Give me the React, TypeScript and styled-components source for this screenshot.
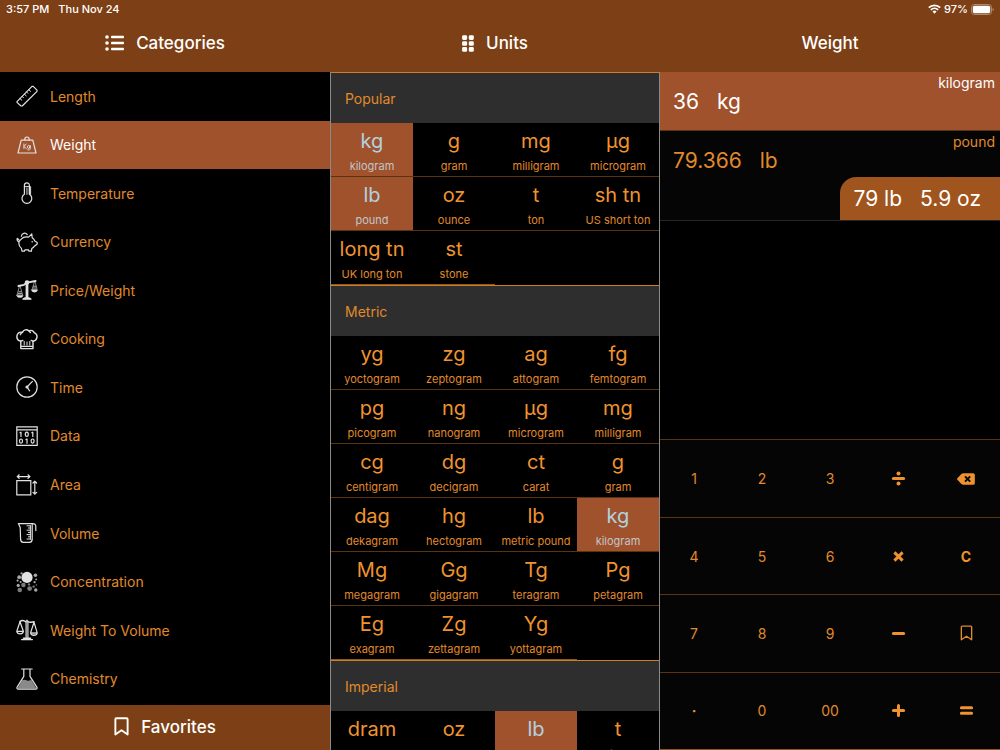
import React from "react";
import styled, { createGlobalStyle, css } from "styled-components";

const color = {
  bar: "#7d4016",
  active: "#a0522d",
  accent: "#f0932f",
  accentSoft: "#e08a2c",
  badge: "#a0541e",
  line: "#5a340f",
  panel: "#2e2e2e",
  key: "#050505",
  picked: "#b2d2e0",
  pickedSoft: "#c0c6c8",
};

const GlobalStyle = createGlobalStyle`
  * { box-sizing: border-box; }
  body {
    margin: 0;
    background: #000;
    color: ${color.accent};
    font-family: Inter, "Liberation Sans", sans-serif;
    font-size: 14px;
  }
  h1, h2, h3, p, ul { margin: 0; padding: 0; font-weight: 400; }
  ul { list-style: none; }
  button {
    margin: 0;
    padding: 0;
    border: 0;
    background: none;
    color: inherit;
    font: inherit;
    cursor: pointer;
  }
  svg { display: block; flex: none; }
`;

const columns = css`
  display: grid;
  grid-template-columns: 33fr 33fr 34fr;
`;

const Page = styled.div`
  display: flex;
  flex-direction: column;
  height: 100vh;
`;

const TopBar = styled.header`
  background: ${color.bar};
  color: #fff;
  padding-bottom: 4px;
`;

const StatusBar = styled.div`
  display: flex;
  justify-content: space-between;
  height: 18px;
  padding: 0 6px;
  font-size: 11px;
  line-height: 18px;
  font-weight: 500;
`;

const StatusGroup = styled.div<{ $gap: number }>`
  display: flex;
  align-items: center;
  gap: ${(p) => p.$gap}px;
`;

const Titles = styled.div`
  ${columns}
  height: 50px;
`;

const Title = styled.h1`
  display: flex;
  align-items: center;
  justify-content: center;
  gap: 12px;
  font-size: 17px;
  font-weight: 500;
`;

const Body = styled.main`
  ${columns}
  flex: 1;
  min-height: 0;
`;

const CategoryColumn = styled.nav`
  display: flex;
  flex-direction: column;
  min-height: 0;
`;

const CategoryList = styled.ul`
  flex: 1;
  display: flex;
  flex-direction: column;
  padding-bottom: 2px;
  min-height: 0;
`;

const CategoryItem = styled.li`
  flex: 1;
  display: flex;
`;

const CategoryButton = styled.button<{ $active: boolean }>`
  flex: 1;
  display: flex;
  align-items: center;
  gap: 12px;
  padding-left: 16px;
  text-align: left;
  background: ${(p) => (p.$active ? color.active : "transparent")};
  color: ${(p) => (p.$active ? "#fff" : color.accentSoft)};
  svg { color: #e2e2e2; }
`;

const FavoritesButton = styled.button`
  display: flex;
  align-items: center;
  justify-content: center;
  gap: 12px;
  height: 45px;
  padding-bottom: 2px;
  background: ${color.bar};
  color: #fff;
  font-size: 17px;
  font-weight: 500;
`;

const UnitColumn = styled.section`
  border-left: 1px solid #8a8a8a;
  border-right: 1px solid #8a8a8a;
  overflow-y: auto;
  scrollbar-width: none;
`;

const GroupTitle = styled.h2`
  display: flex;
  align-items: center;
  height: 51px;
  padding: 0 14px;
  border-top: 1px solid #d07d28;
  background: ${color.panel};
  color: ${color.accentSoft};
  font-size: 14px;
`;

const UnitGrid = styled.div`
  display: grid;
  grid-template-columns: repeat(4, 1fr);
`;

const Symbol = styled.span`
  font-size: 20px;
  line-height: 24px;
`;

const UnitName = styled.span`
  font-size: 11px;
  line-height: 18px;
`;

const UnitButton = styled.button<{ $active: boolean; $last: boolean }>`
  display: flex;
  flex-direction: column;
  align-items: center;
  gap: 4px;
  height: 54px;
  padding-top: 6px;
  white-space: nowrap;
  border-bottom: 1px solid ${(p) => (p.$last ? "#8f561c" : color.line)};
  background: ${(p) => (p.$active ? color.active : "transparent")};
  color: ${(p) => (p.$active ? color.picked : color.accent)};
  ${UnitName} {
    color: ${(p) => (p.$active ? color.pickedSoft : color.accentSoft)};
  }
`;

const ConverterColumn = styled.section`
  display: flex;
  flex-direction: column;
  min-height: 0;
`;

const Results = styled.div`
  flex: 368 1 0;
`;

const Result = styled.div<{ $active?: boolean }>`
  display: flex;
  flex-direction: column;
  border-bottom: 1px solid ${(p) => (p.$active ? color.line : "#262626")};
  background: ${(p) => (p.$active ? color.active : color.key)};
  color: ${(p) => (p.$active ? "#fff" : color.accentSoft)};
`;

const ResultMain = styled.div`
  display: flex;
  justify-content: space-between;
  height: 58px;
  padding: 0 5px 0 13px;
`;

const Amount = styled.p`
  display: flex;
  align-items: center;
  gap: 18px;
  font-size: 21px;
`;

const ResultUnit = styled.span`
  line-height: 22px;
`;

const Breakdown = styled.p`
  display: flex;
  align-items: center;
  align-self: flex-end;
  gap: 18px;
  height: 43px;
  margin-top: -12px;
  padding: 0 19px 0 14px;
  border-top-left-radius: 16px;
  background: ${color.badge};
  color: #fff;
  font-size: 21px;
`;

const Keypad = styled.div`
  flex: 310 1 0;
  display: grid;
  grid-template-columns: repeat(5, 1fr);
  grid-template-rows: repeat(4, 1fr);
  border-bottom: 1px solid #8f561c;
`;

const Key = styled.button<{ $strong?: boolean }>`
  display: flex;
  align-items: center;
  justify-content: center;
  border-top: 1px solid ${color.line};
  background: ${color.key};
  color: ${(p) => (p.$strong ? color.accent : color.accentSoft)};
  font-weight: ${(p) => (p.$strong ? 700 : 400)};
`;

/* ---------- icons ---------- */

const Icon = ({ children, w = 1.3 }: { children: React.ReactNode; w?: number }) => (
  <svg width="22" height="22" viewBox="0 0 22 22" fill="none" stroke="currentColor" strokeWidth={w} strokeLinejoin="round" strokeLinecap="round" aria-hidden="true">
    {children}
  </svg>
);

const BookmarkIcon = ({ width, height, w }: { width: number; height: number; w: number }) => (
  <svg width={width} height={height} viewBox="0 0 14 18" fill="none" stroke="currentColor" strokeWidth={w} strokeLinejoin="round" aria-hidden="true">
    <path d="M1.2 2.2Q1.2 1.2 2.2 1.2H11.8Q12.8 1.2 12.8 2.2V16.6L7 12.6L1.2 16.6Z" />
  </svg>
);

const icons: Record<string, React.ReactNode> = {
  Length: (
    <Icon w={1.2}>
      <path d="M1 16.6L16 1.4H17.2L21 5.2V6.4L6.2 21H5L1 17.4Z" />
      <path d="M4 13.6L5.8 15.2M6.2 11.4L7.4 12.6M8.4 9.2L10.2 10.8M10.6 7L11.8 8.2M12.8 4.8L14.6 6.4" strokeWidth="1" />
    </Icon>
  ),
  Weight: (
    <Icon w={1.2}>
      <path d="M5.2 6.2H16.8L20 19H2L5.2 6.2Z" />
      <path d="M8.8 6V5.2A2.2 2.2 0 0 1 13.2 5.2V6" />
      <path strokeWidth="0.9" d="M7.9 10V14.6M10.2 10L8 12.6L10.4 14.6" />
      <ellipse cx="12.7" cy="12.9" rx="1.3" ry="1.5" strokeWidth="0.9" />
      <path strokeWidth="0.9" d="M14.2 11.5V15.2Q13.8 16.3 11.8 15.9" />
    </Icon>
  ),
  Temperature: (
    <Icon w={1.2}>
      <path d="M8.4 12.2V3.4A2.5 2.5 0 0 1 13.4 3.4V12.2A4.9 4.9 0 1 1 8.4 12.2Z" />
      <path d="M8.6 4.6H14.6V12.4" strokeWidth="1" />
      <path d="M10.4 6V12.4M11.8 6V12.4" strokeWidth="0.6" />
    </Icon>
  ),
  Currency: (
    <Icon w={1.2}>
      <path d="M5.2 8.2C7 6.2 9.8 5.6 12.6 6.2L15.8 3L16.2 6.8C17.6 7.8 18.4 9 18.8 10L21.2 11.4V13L18.4 15.2C17.6 16.4 16.8 17 15.8 17.6L15.4 20.2H13L12.4 18.8H9L8.4 20.2H6L5.4 17.4C3.6 15.8 2.8 13.8 2.8 12C2.8 10.6 3.6 9.2 5.2 8.2Z" />
      <path d="M2.8 10.6Q0.6 10 1.2 7.4M1.2 7.4L2.8 8.6M5.4 5.2A3.2 3.2 0 0 1 11.2 3.6" />
      <circle cx="16.2" cy="10.8" r="0.8" fill="currentColor" stroke="none" />
    </Icon>
  ),
  "Price/Weight": (
    <Icon>
      <path d="M2.4 7L8 5.8L11 3.6L19.6 2" strokeWidth="1.8" />
      <circle cx="11" cy="3.4" r="1.6" fill="currentColor" />
      <path d="M11 4V19" strokeWidth="2.8" strokeLinecap="butt" />
      <path d="M7 20.2Q8 18.6 11 18.6T15 20.2Z" fill="currentColor" />
      <path d="M3.4 7.4L1 16H6.6L4.2 7.4M18.6 2.4L16 10.6H21.2L19 2.4" strokeWidth="0.6" />
      <path d="M0.6 16.4H7.2Q6.6 18.6 3.9 18.6T0.6 16.4ZM15.4 11H21.6Q21 13.2 18.5 13.2T15.4 11Z" fill="currentColor" strokeWidth="0.4" />
      <path d="M2.4 14.6H5.4M2.8 12.8H5M17.2 9H20M17.6 7.2H19.6" strokeWidth="0.8" />
    </Icon>
  ),
  Cooking: (
    <Icon w={1.4}>
      <path d="M4.8 13.2C1.6 12.6 0.6 10 1 7.6C1.4 5 4.2 3.6 6.4 4.4C7.6 1.8 10.6 0.8 12.8 2.8C15.2 1.8 17.6 2.8 18.2 4.8C20.6 5.4 21.4 8 20.8 10C20.2 12.2 18.8 13 17 13.2" />
      <path d="M4.8 13.2V20.6H17V13.2M4.8 18.4H17M6.4 4.4Q4.8 5 4.4 6.6M13 3L14.4 4.4M4.8 13.2L6.8 12.4M17 13.2L15.2 12.4" />
      <path d="M8.2 13.4V17M11 14V17M13.8 13.4V17" strokeWidth="1" />
    </Icon>
  ),
  Time: (
    <Icon w={1.2}>
      <circle cx="11" cy="11" r="10.2" />
      <path d="M16.4 5.4L11 11L13.6 14.8" />
      <circle cx="11" cy="11" r="1" fill="currentColor" />
    </Icon>
  ),
  Data: (
    <Icon w={1.2}>
      <path d="M0.8 1.8H21.2V20.4H0.8ZM0.8 4.8H21.2" strokeLinejoin="miter" />
      <path d="M4 7.8L5 7.2V11.4M15.8 7.8L16.8 7.2V11.4M10 14.6L11 14V18.2" />
      <ellipse cx="10.8" cy="9.3" rx="1.5" ry="2.1" />
      <ellipse cx="5" cy="16.1" rx="1.5" ry="2.1" />
      <ellipse cx="16.6" cy="16.1" rx="1.5" ry="2.1" />
    </Icon>
  ),
  Area: (
    <Icon w={1.2}>
      <path d="M0.8 6.6H14.8V20.8H0.8Z" strokeLinejoin="miter" />
      <path d="M1.2 2.6H14M3.2 0.8L1.2 2.6L3.2 4.4M12 0.8L14 2.6L12 4.4M18.8 7.2V20.2M17 9L18.8 7.2L20.6 9M17 18.4L18.8 20.2L20.6 18.4" />
    </Icon>
  ),
  Volume: (
    <Icon w={1.2}>
      <path d="M2.4 1.6H16.4Q19.8 1.4 19.8 4.6V8.6M2.4 1.6L4.2 5.4L4.6 17.4Q4.8 20.4 7.4 20.4H13.4Q16 20.4 16.2 17.4V2.4" />
      <path d="M11 3.8H14.4M12.4 6H14.4M11 8.2H14.4M12.4 10.4H14.4M11 12.6H14.4M12.4 14.8H14.4M11 17H14.4M14.4 3.6V17.4" strokeWidth="1" />
    </Icon>
  ),
  Concentration: (
    <svg width="22" height="22" viewBox="0 0 22 22" fill="currentColor" aria-hidden="true">
      <circle cx="11" cy="6.4" r="5.6" />
      <g opacity="0.75">
        <circle cx="3.2" cy="6.2" r="1.9" />
        <circle cx="5.6" cy="2.4" r="1.1" />
        <circle cx="1.6" cy="9.6" r="1.1" />
        <circle cx="19.4" cy="4.2" r="1.8" />
        <circle cx="20.2" cy="8.4" r="0.9" />
        <circle cx="18.6" cy="11.2" r="1.1" />
        <circle cx="2.2" cy="14.4" r="1.6" />
        <circle cx="19.8" cy="19" r="1.7" />
        <circle cx="4.6" cy="11" r="1" />
      </g>
      <g opacity="0.55">
        <circle cx="7.4" cy="14" r="2.2" />
        <circle cx="3.8" cy="19" r="2.3" />
        <circle cx="13.6" cy="17.6" r="2.4" />
        <circle cx="13" cy="13.4" r="1.2" />
        <circle cx="17.6" cy="15.6" r="1.2" />
        <circle cx="20.4" cy="14" r="0.8" />
      </g>
    </svg>
  ),
  "Weight To Volume": (
    <Icon w={1.2}>
      <path d="M10.1 2.2V19M11.9 2.2V19M11 1V2" />
      <path d="M5.6 20.6H16.4M7.4 19.2H14.6" strokeWidth="1.4" />
      <path d="M4 2.4C6 1 8.4 1.6 9.8 2.8M12.2 2.8C13.8 3.6 16 3 18 2.8" strokeWidth="1.5" />
      <path d="M4 2.8L0.8 12.2M4 2.8L7.4 12.2M0.8 12.4H7.4Q7 14.8 4.1 14.8T0.8 12.4Z" />
      <path d="M18 3.2L14.6 13.8M18 3.2L21.2 13.8M14.6 14H21.2Q20.8 16.4 17.9 16.4T14.6 14Z" />
      <path d="M15 14.2H21Q20 16 18 16T15 14.2Z" fill="currentColor" opacity="0.5" />
    </Icon>
  ),
  Chemistry: (
    <Icon w={1.2}>
      <path d="M6.2 12.2Q8.6 11.2 11 12.6Q13 13.4 15 11.6L20 19.8Q20.4 20.6 19.6 20.6H2.4Q1.6 20.6 2 19.8Z" fill="#8a8a8a" stroke="none" />
      <path d="M5.6 1H16.2M7.8 1.4V8.4L1 19.4Q0.6 21.2 2.2 21.2H19.8Q21.4 21.2 21 19.4L14 8.4V1.4" />
    </Icon>
  ),
};

const ListIcon = () => (
  <svg width="19" height="16" viewBox="0 0 19 16" fill="#fff" aria-hidden="true">
    {[2, 8, 14].map((y) => (
      <React.Fragment key={y}>
        <circle cx="2" cy={y} r="1.8" />
        <rect x="6" y={y - 1.3} width="13" height="2.6" rx="0.8" />
      </React.Fragment>
    ))}
  </svg>
);

const GridIcon = () => (
  <svg width="12" height="17" viewBox="0 0 12 17" fill="#fff" aria-hidden="true">
    {[0.3, 6.2, 12.1].map((y) => (
      <React.Fragment key={y}>
        <rect x="0.1" y={y} width="5" height="4.6" rx="1.3" />
        <rect x="6.8" y={y} width="5" height="4.6" rx="1.3" />
      </React.Fragment>
    ))}
  </svg>
);

const WifiIcon = () => (
  <svg width="13" height="10" viewBox="0 0 13 10" fill="none" stroke="#fff" strokeWidth="1.8" aria-hidden="true">
    <path d="M0.8 3.6A8.2 8.2 0 0 1 12.2 3.6M2.9 5.9A5.2 5.2 0 0 1 10.1 5.9" />
    <path d="M4.5 7.6A2.8 2.8 0 0 1 8.5 7.6L6.5 9.7Z" fill="#fff" stroke="none" />
  </svg>
);

const BatteryIcon = () => (
  <svg width="23" height="11" viewBox="0 0 23 11" aria-hidden="true">
    <rect x="0.5" y="0.5" width="20" height="10" rx="2.8" fill="none" stroke="#b08a70" />
    <rect x="1.8" y="1.8" width="17.4" height="7.4" rx="1.6" fill="#fff" />
    <path d="M21.6 3.8Q22.8 4.4 22.8 5.5T21.6 7.2Z" fill="#b08a70" />
  </svg>
);

const Operator = ({ children }: { children: React.ReactNode }) => (
  <svg width="15" height="15" viewBox="0 0 15 15" fill="currentColor" stroke="currentColor" strokeWidth="3" strokeLinecap="round" aria-hidden="true">
    {children}
  </svg>
);

const DivideIcon = () => (
  <Operator>
    <path d="M2.4 7.5H12.6" />
    <circle cx="7.5" cy="2.6" r="2" stroke="none" />
    <circle cx="7.5" cy="12.4" r="2" stroke="none" />
  </Operator>
);
const TimesIcon = () => (
  <Operator>
    <path d="M3.4 3.4L11.6 11.6M11.6 3.4L3.4 11.6" strokeLinecap="butt" />
  </Operator>
);
const MinusIcon = () => (
  <Operator>
    <path d="M2.4 7.5H12.6" />
  </Operator>
);
const PlusIcon = () => (
  <Operator>
    <path d="M2.4 7.5H12.6M7.5 2.4V12.6" />
  </Operator>
);
const EqualsIcon = () => (
  <Operator>
    <path d="M2.4 4.7H12.6M2.4 10.3H12.6" />
  </Operator>
);
const BackspaceIcon = () => (
  <svg width="18" height="12" viewBox="0 0 18 12" aria-hidden="true">
    <path d="M0.4 5.2L4.4 1Q5.2 0.2 6.4 0.2H16.2Q17.8 0.2 17.8 1.8V10.2Q17.8 11.8 16.2 11.8H6.4Q5.2 11.8 4.4 11L0.4 6.8Q-0.3 6 0.4 5.2Z" fill="currentColor" />
    <path d="M8 3.4L13.2 8.6M13.2 3.4L8 8.6" stroke={color.key} strokeWidth="2" />
  </svg>
);

/* ---------- data ---------- */

type Unit = [symbol: string, name: string, active?: boolean];

const groups: { title: string; units: Unit[] }[] = [
  {
    title: "Popular",
    units: [
      ["kg", "kilogram", true], ["g", "gram"], ["mg", "milligram"], ["µg", "microgram"],
      ["lb", "pound", true], ["oz", "ounce"], ["t", "ton"], ["sh tn", "US short ton"],
      ["long tn", "UK long ton"], ["st", "stone"],
    ],
  },
  {
    title: "Metric",
    units: [
      ["yg", "yoctogram"], ["zg", "zeptogram"], ["ag", "attogram"], ["fg", "femtogram"],
      ["pg", "picogram"], ["ng", "nanogram"], ["µg", "microgram"], ["mg", "milligram"],
      ["cg", "centigram"], ["dg", "decigram"], ["ct", "carat"], ["g", "gram"],
      ["dag", "dekagram"], ["hg", "hectogram"], ["lb", "metric pound"], ["kg", "kilogram", true],
      ["Mg", "megagram"], ["Gg", "gigagram"], ["Tg", "teragram"], ["Pg", "petagram"],
      ["Eg", "exagram"], ["Zg", "zettagram"], ["Yg", "yottagram"],
    ],
  },
  {
    title: "Imperial",
    units: [["dram", "dram"], ["oz", "ounce"], ["lb", "pound", true], ["t", "ton"]],
  },
];

const keys: { label: string; face?: React.ReactNode; strong?: boolean }[] = [
  { label: "1" }, { label: "2" }, { label: "3" },
  { label: "Divide", face: <DivideIcon />, strong: true },
  { label: "Backspace", face: <BackspaceIcon />, strong: true },
  { label: "4" }, { label: "5" }, { label: "6" },
  { label: "Multiply", face: <TimesIcon />, strong: true },
  { label: "Clear", face: "C", strong: true },
  { label: "7" }, { label: "8" }, { label: "9" },
  { label: "Subtract", face: <MinusIcon />, strong: true },
  { label: "Bookmark", face: <BookmarkIcon width={13} height={16} w={1.5} /> },
  { label: "Decimal point", face: "·", strong: true },
  { label: "0" }, { label: "00" },
  { label: "Add", face: <PlusIcon />, strong: true },
  { label: "Equals", face: <EqualsIcon />, strong: true },
];

export default function App() {
  const current = "Weight";
  return (
    <Page>
      <GlobalStyle />
      <TopBar>
        <StatusBar>
          <StatusGroup $gap={9}>
            <span>3:57 PM</span>
            <span>Thu Nov 24</span>
          </StatusGroup>
          <StatusGroup $gap={3}>
            <WifiIcon />
            <span>97%</span>
            <BatteryIcon />
          </StatusGroup>
        </StatusBar>
        <Titles>
          <Title><ListIcon />Categories</Title>
          <Title><GridIcon />Units</Title>
          <Title>{current}</Title>
        </Titles>
      </TopBar>
      <Body>
        <CategoryColumn aria-label="Categories">
          <CategoryList>
            {Object.entries(icons).map(([name, icon]) => (
              <CategoryItem key={name}>
                <CategoryButton type="button" $active={name === current}>
                  {icon}
                  <span>{name}</span>
                </CategoryButton>
              </CategoryItem>
            ))}
          </CategoryList>
          <FavoritesButton type="button">
            <BookmarkIcon width={15} height={19} w={1.8} />
            Favorites
          </FavoritesButton>
        </CategoryColumn>

        <UnitColumn>
          {groups.map((group) => (
            <React.Fragment key={group.title}>
              <GroupTitle>{group.title}</GroupTitle>
              <UnitGrid>
                {group.units.map(([symbol, name, active], i) => (
                  <UnitButton
                    type="button"
                    key={name}
                    $active={!!active}
                    $last={i >= Math.floor((group.units.length - 1) / 4) * 4}
                  >
                    <Symbol>{symbol}</Symbol>
                    <UnitName>{name}</UnitName>
                  </UnitButton>
                ))}
              </UnitGrid>
            </React.Fragment>
          ))}
        </UnitColumn>

        <ConverterColumn>
          <Results>
            <Result $active>
              <ResultMain>
                <Amount><span>36</span><span>kg</span></Amount>
                <ResultUnit>kilogram</ResultUnit>
              </ResultMain>
            </Result>
            <Result>
              <ResultMain>
                <Amount><span>79.366</span><span>lb</span></Amount>
                <ResultUnit>pound</ResultUnit>
              </ResultMain>
              <Breakdown><span>79 lb</span><span>5.9 oz</span></Breakdown>
            </Result>
          </Results>
          <Keypad>
            {keys.map((key) => (
              <Key type="button" key={key.label} aria-label={key.label} $strong={key.strong}>
                {key.face ?? key.label}
              </Key>
            ))}
          </Keypad>
        </ConverterColumn>
      </Body>
    </Page>
  );
}
